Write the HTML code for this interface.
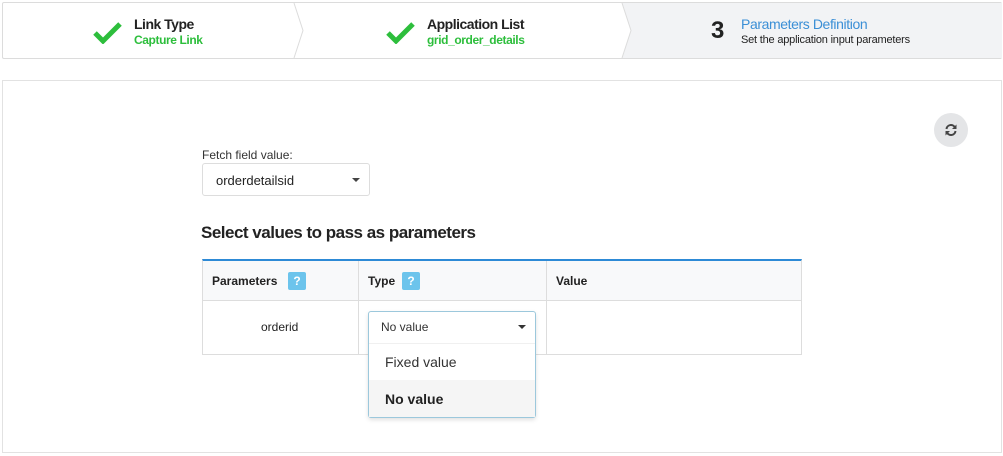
<!DOCTYPE html>
<html><head><style>
*{box-sizing:border-box;margin:0;padding:0}
body{width:1003px;height:456px;background:#fff;font-family:"Liberation Sans",sans-serif;position:relative;overflow:hidden;color:#333}
.abs{position:absolute}
.steps{left:2px;top:2px;width:1000px;height:57px;border:1px solid #dcdcdc;border-radius:2px;background:#fff}
.s3{left:619px;top:0;width:380px;height:55px;background:#f2f3f5}
.t{font-size:14px;font-weight:bold;color:#222;letter-spacing:-0.5px}
.sub{font-size:12px;font-weight:bold;color:#2dbe3c;letter-spacing:-0.4px}
.panel{left:2px;top:80px;width:1000px;height:373px;border:1px solid #e2e2e2}
</style></head><body>
<div class="abs steps">
 <div class="abs s3"></div>
 <svg class="abs" style="left:290px;top:0" width="14" height="55"><polyline points="1,0 10,27.5 1,55" fill="#fff" stroke="#dcdcdc"/></svg>
 <svg class="abs" style="left:616px;top:0" width="14" height="55"><polygon points="0,0 3,0 12,27.5 3,55 0,55" fill="#fff"/><polyline points="3,0 12,27.5 3,55" fill="none" stroke="#dcdcdc"/></svg>
 <svg class="abs" style="left:90px;top:19px" width="30" height="22"><path d="M2 11 L10 19 L27 2" fill="none" stroke="#2dbe3c" stroke-width="5"/></svg>
 <div class="abs t" style="left:131px;top:13px">Link Type</div>
 <div class="abs sub" style="left:131px;top:30px">Capture Link</div>
 <svg class="abs" style="left:383px;top:19px" width="30" height="22"><path d="M2 11 L10 19 L27 2" fill="none" stroke="#2dbe3c" stroke-width="5"/></svg>
 <div class="abs t" style="left:424px;top:13px">Application List</div>
 <div class="abs sub" style="left:424px;top:30px">grid_order_details</div>
 <div class="abs" style="left:708px;top:14px;font-size:24px;font-weight:bold;color:#222">3</div>
 <div class="abs" style="left:738px;top:13px;font-size:14px;color:#3b8fd6;letter-spacing:-0.4px">Parameters Definition</div>
 <div class="abs" style="left:738px;top:31px;font-size:11px;color:#222;letter-spacing:-0.2px">Set the application input parameters</div>
</div>
<div class="abs panel"></div>
<div class="abs" style="left:934px;top:113px;width:34px;height:34px;border-radius:50%;background:#e4e5e7"></div>
<svg class="abs" style="left:944px;top:123px" width="14" height="14" viewBox="0 0 14 14"><path d="M2.5 6 A4.5 4.5 0 0 1 11 4.5" fill="none" stroke="#444" stroke-width="2"/><path d="M11.5 8 A4.5 4.5 0 0 1 3 9.5" fill="none" stroke="#444" stroke-width="2"/><polygon points="12.5,1.5 12.5,6 8,6" fill="#444"/><polygon points="1.5,12.5 1.5,8 6,8" fill="#444"/></svg>
<div class="abs" style="left:202px;top:148px;font-size:12px;color:#333">Fetch field value:</div>
<div class="abs" style="left:202px;top:163px;width:168px;height:33px;border:1px solid #ddd;border-radius:3px;font-size:13px;padding:9px 13px;color:#222">orderdetailsid</div>
<div class="abs" style="left:352px;top:178px;border-left:4px solid transparent;border-right:4px solid transparent;border-top:4px solid #444"></div>
<div class="abs" style="left:201px;top:223px;font-size:17px;font-weight:bold;color:#222;letter-spacing:-0.5px">Select values to pass as parameters</div>
<div class="abs" style="left:202px;top:259px;width:600px;height:96px;border:1px solid #ddd;border-top:2px solid #2d8ad6"></div>
<div class="abs" style="left:203px;top:261px;width:598px;height:40px;background:#f8f9fa;border-bottom:1px solid #ddd"></div>
<div class="abs" style="left:358px;top:261px;width:1px;height:93px;background:#ddd"></div>
<div class="abs" style="left:546px;top:261px;width:1px;height:93px;background:#ddd"></div>
<div class="abs" style="left:212px;top:274px;font-size:12px;font-weight:bold;color:#222">Parameters</div>
<div class="abs" style="left:288px;top:272px;width:18px;height:18px;background:#6cc4ec;border-radius:2px;color:#fff;font-size:12px;font-weight:bold;text-align:center;line-height:18px">?</div>
<div class="abs" style="left:368px;top:274px;font-size:12px;font-weight:bold;color:#222">Type</div>
<div class="abs" style="left:402px;top:272px;width:18px;height:18px;background:#6cc4ec;border-radius:2px;color:#fff;font-size:12px;font-weight:bold;text-align:center;line-height:18px">?</div>
<div class="abs" style="left:556px;top:274px;font-size:12px;font-weight:bold;color:#222">Value</div>
<div class="abs" style="left:261px;top:320px;font-size:12px;color:#222">orderid</div>
<div class="abs" style="left:368px;top:311px;width:168px;height:107px;border:1px solid #9cc8dc;border-radius:3px;background:#fff;box-shadow:0 2px 4px rgba(0,0,0,.12)"></div>
<div class="abs" style="left:381px;top:320px;font-size:12px;color:#333">No value</div>
<div class="abs" style="left:518px;top:325px;border-left:4px solid transparent;border-right:4px solid transparent;border-top:4px solid #333"></div>
<div class="abs" style="left:369px;top:343px;width:166px;height:1px;background:#f0f0f0"></div>
<div class="abs" style="left:385px;top:354px;font-size:14px;color:#333">Fixed value</div>
<div class="abs" style="left:369px;top:380px;width:166px;height:37px;background:#f5f5f5"></div>
<div class="abs" style="left:385px;top:391px;font-size:14px;font-weight:bold;color:#222">No value</div>
</body></html>
